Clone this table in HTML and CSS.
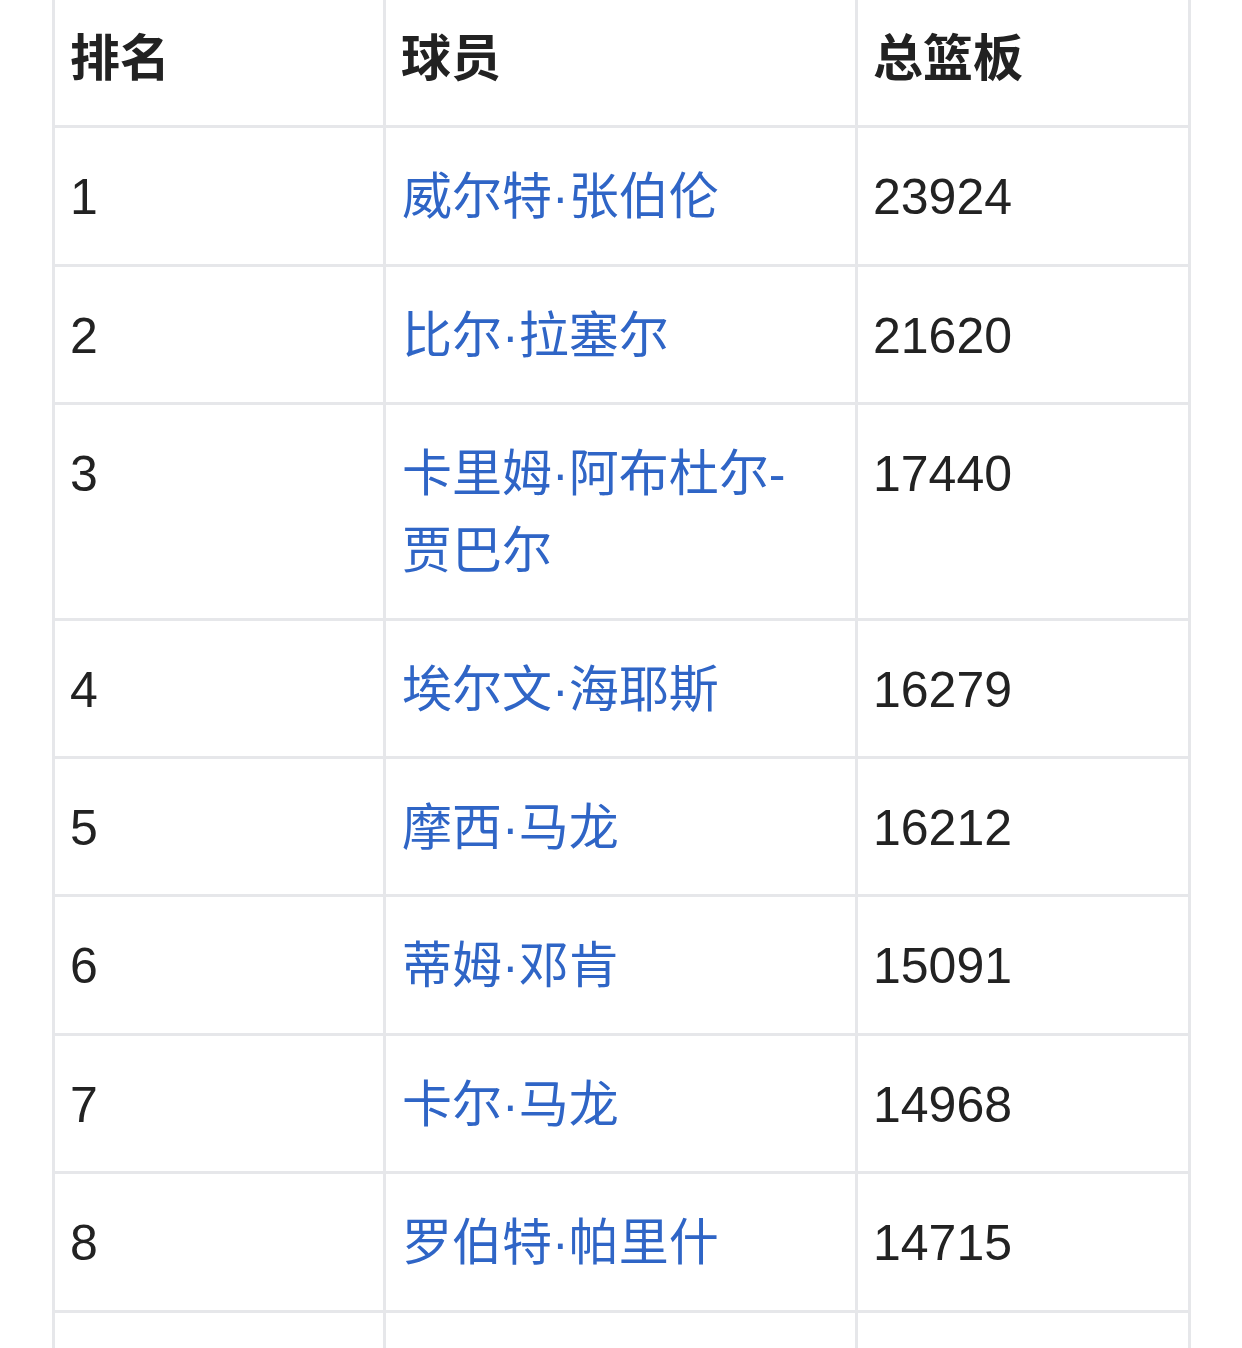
FILE: index.html
```html
<!DOCTYPE html>
<html lang="zh">
<head>
<meta charset="utf-8">
<title>总篮板排名</title>
<link rel="stylesheet" href="styles.css">
</head>
<body>
<table class="rank-table">
  <colgroup>
    <col class="col-rank">
    <col class="col-player">
    <col class="col-total">
  </colgroup>
  <thead>
    <tr><th>排名</th><th>球员</th><th>总篮板</th></tr>
  </thead>
  <tbody>
    <tr><td>1</td><td><a href="#">威尔特·张伯伦</a></td><td>23924</td></tr>
    <tr><td>2</td><td><a href="#">比尔·拉塞尔</a></td><td>21620</td></tr>
    <tr><td>3</td><td><a href="#">卡里姆·阿布杜尔-贾巴尔</a></td><td>17440</td></tr>
    <tr><td>4</td><td><a href="#">埃尔文·海耶斯</a></td><td>16279</td></tr>
    <tr><td>5</td><td><a href="#">摩西·马龙</a></td><td>16212</td></tr>
    <tr><td>6</td><td><a href="#">蒂姆·邓肯</a></td><td>15091</td></tr>
    <tr><td>7</td><td><a href="#">卡尔·马龙</a></td><td>14968</td></tr>
    <tr><td>8</td><td><a href="#">罗伯特·帕里什</a></td><td>14715</td></tr>
    <tr><td>9</td><td><a href="#">沃尔特·贝拉米</a></td><td>14241</td></tr>
  </tbody>
</table>
</body>
</html>
```
FILE: styles.css
```css
html, body {
  margin: 0;
  padding: 0;
  background: #ffffff;
}
body {
  font-family: "Liberation Sans", "Noto Sans CJK SC", sans-serif;
  color: #222222;
  overflow: hidden;
}
.rank-table {
  margin: -13px 0 0 52px;
  border-collapse: separate;
  border-spacing: 0;
  table-layout: fixed;
  width: 1139px;
}
.col-rank { width: 334px; }
.col-player { width: 472px; }
.col-total { width: 333px; }
.rank-table th,
.rank-table td {
  box-sizing: border-box;
  border-right: 3px solid #e6e7ea;
  border-bottom: 3px solid #e6e7ea;
  padding: 31px 15px 27.4px;
  font-size: 50px;
  line-height: 77px;
  text-align: left;
  vertical-align: top;
}
.rank-table th:first-child,
.rank-table td:first-child {
  border-left: 3px solid #e6e7ea;
}
.rank-table thead th {
  border-top: 3px solid #e6e7ea;
  font-weight: bold;
  color: #222222;
}
.rank-table td:nth-child(2) {
  padding-left: 16px;
  padding-right: 30px;
}
.rank-table a {
  color: #2f65c6;
  text-decoration: none;
}
```
